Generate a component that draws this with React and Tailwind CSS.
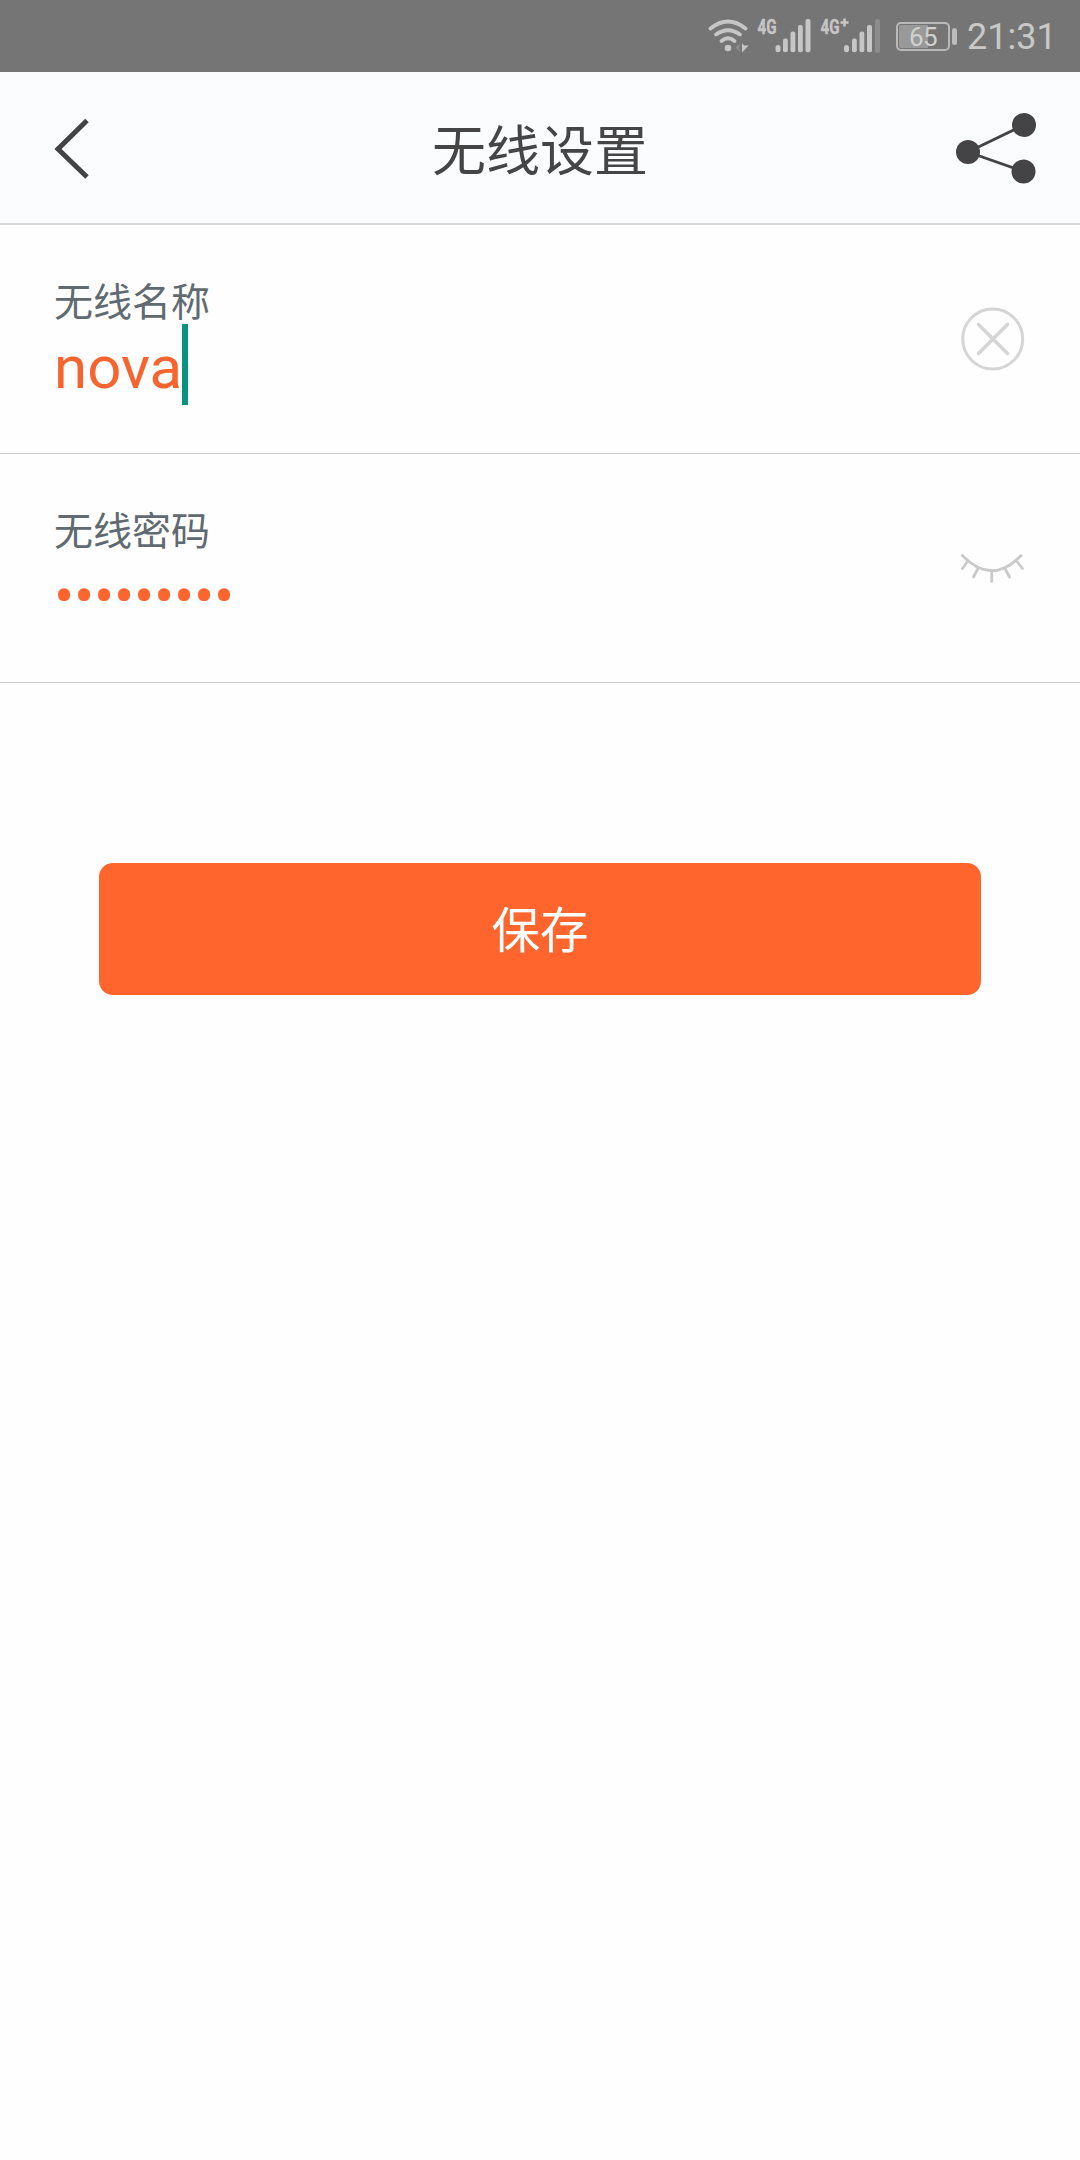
function Wifi() {
  return (
    <svg className="ml-[708px] h-[72px] w-[42px] shrink-0" viewBox="708 0 42 72" fill="none" stroke="#c6c6c6" strokeWidth="3.8" strokeLinecap="round">
      <path d="M710.5 28.5Q728 14.5 745.5 28.5" />
      <path d="M716 34.5Q728 26 740 34.5" />
      <path d="M721.5 41Q728 35.5 734.5 41" />
      <circle cx="728" cy="48" r="3.3" fill="#c6c6c6" stroke="none" />
      <path d="M739.5 43.5V52L735.5 47.5Z" fill="#8d8d8d" stroke="none" />
      <path d="M742 43L744 45.5H748.5L742 52.5Z" fill="#c6c6c6" stroke="none" />
    </svg>
  );
}

function Signal({ plus }) {
  return (
    <svg className="h-[72px] w-[56px] shrink-0" viewBox="0 0 56 72" fill="#c6c6c6">
      <text x="0.5" y="34" fontFamily="Roboto, sans-serif" fontWeight="700" fontSize="21" textLength="19" lengthAdjust="spacingAndGlyphs" stroke="#c6c6c6" strokeWidth="0.4">4G</text>
      {plus && <path d="M23.2 18.5h2.6v2.7h2.7v2.6h-2.7v2.7h-2.6v-2.7h-2.7v-2.6h2.7Z" />}
      {plus ? (
        <g>
          <rect x="24" y="45" width="5" height="7.3" rx="2.5" />
          <rect x="32" y="38.5" width="4.8" height="13.8" rx="2" />
          <rect x="39.5" y="31.5" width="4.8" height="20.8" rx="2" />
          <rect x="47" y="25" width="5" height="27.3" rx="2" />
        </g>
      ) : (
        <g>
          <rect x="18.5" y="45" width="5" height="7.3" rx="2.5" />
          <rect x="26" y="38.5" width="4.8" height="13.8" rx="2" />
          <rect x="33.5" y="31.5" width="4.8" height="20.8" rx="2" />
          <rect x="41" y="25" width="4.8" height="27.3" rx="2" />
          <rect x="48.5" y="19" width="5" height="33.3" rx="2" />
        </g>
      )}
    </svg>
  );
}

function StatusBar() {
  return (
    <div className="flex h-[72px] items-center bg-[#757575] font-['Roboto',sans-serif] text-[#c8c8c8]">
      <Wifi />
      <div className="ml-[7px] flex">
        <Signal />
      </div>
      <div className="ml-[7px] flex items-center">
        <Signal plus />
        <div className="-ml-px h-[34px] w-[5px] rounded-full bg-[#8d8d8d]" />
      </div>
      <div className="ml-[16px] flex h-[29px] w-[54px] items-center rounded-[5px] border-2 border-[#b9b9b9] bg-linear-to-r from-[#999999] from-60% to-[#757575] to-60% bg-clip-content p-px">
        <div className="flex-1 pt-px text-center text-[26px] leading-[24px] tracking-[-0.5px] text-[#d0d0d0]">65</div>
      </div>
      <div className="ml-[2px] h-[17px] w-[5px] rounded-full bg-[#bdbdbd]" />
      <div className="ml-[10px] pt-[2px] text-[36px] leading-[74px]">21:31</div>
    </div>
  );
}

function Header() {
  return (
    <header className="flex h-[153px] items-center justify-between border-b-2 border-[#d5d6d8] bg-[#fbfcfe] pr-[42px] pl-[54px]">
      <svg className="h-[62px] w-[72px]" viewBox="54 117 72 62" fill="none" stroke="#434345" strokeWidth="5">
        <path d="M87 120.5L58 149L87 177" />
      </svg>
      <h1 className="pt-px text-[54px] leading-[80px] text-[#454545]">无线设置</h1>
      <svg className="h-[76px] w-[84px]" viewBox="954 110 84 76" fill="#444446" stroke="#444446" strokeWidth="2.8">
        <path d="M968 152L1024 125M968 152L1023.5 171.5" />
        <g stroke="none">
          <circle cx="968" cy="152" r="12" />
          <circle cx="1024" cy="125" r="12" />
          <circle cx="1023.5" cy="171.5" r="12" />
        </g>
      </svg>
    </header>
  );
}

function Field({ label, value, secret, caret, icon }) {
  return (
    <section className="flex h-[229px] items-start justify-between border-b border-[#cfcfcf] pt-[49px] pr-[50px] pl-[54px]">
      <div>
        <div className="text-[39px] leading-[50px] text-[#616a70]">{label}</div>
        <div className="flex h-[81px] font-['Roboto',sans-serif] text-[60px] text-[#f6652f]">
          <span className={secret ? "pt-[6px] leading-[75px] tracking-[-0.25px] text-[#fc652d]" : "pt-[6px] leading-[75px]"}>{value}</span>
          {caret && <span className="w-[6px] bg-[#069480]" />}
        </div>
      </div>
      {icon}
    </section>
  );
}

function ClearIcon() {
  return (
    <svg className="mt-[29px] h-[72px] w-[72px]" viewBox="0 0 72 72" fill="none" stroke="#d5d5d5" strokeWidth="3">
      <circle cx="34.7" cy="36" r="30" />
      <path d="M20.5 21.5L49.5 50.5M49.5 21.5L20.5 50.5" strokeWidth="3.6" strokeLinecap="round" />
    </svg>
  );
}

function ClosedEyeIcon() {
  return (
    <svg className="mt-[29px] h-[72px] w-[72px]" viewBox="958 532 72 72" fill="none" stroke="#cacaca" strokeWidth="2.8" strokeLinecap="round">
      <path d="M962.3 555.5Q992 586 1021 555.5" />
      <path d="M967.5 561.5L962.5 568.5M978 568.5L973.5 577M991.7 571V581.5M1005 568.5L1009.5 577M1017 561.5L1022.5 568.5" />
    </svg>
  );
}

export default function App() {
  return (
    <main className="min-h-[2160px] w-[1080px] bg-[#fefefe] font-['Noto_Sans_CJK_SC',sans-serif]">
      <StatusBar />
      <Header />
      <Field label="无线名称" value="nova" caret icon={<ClearIcon />} />
      <Field label="无线密码" value="•••••••••" secret icon={<ClosedEyeIcon />} />
      <button className="mx-auto mt-[180px] block h-[132px] w-[882px] rounded-[14px] bg-[#ff652c] pb-[5px] text-[48.5px] leading-[70px] text-white">保存</button>
    </main>
  );
}
